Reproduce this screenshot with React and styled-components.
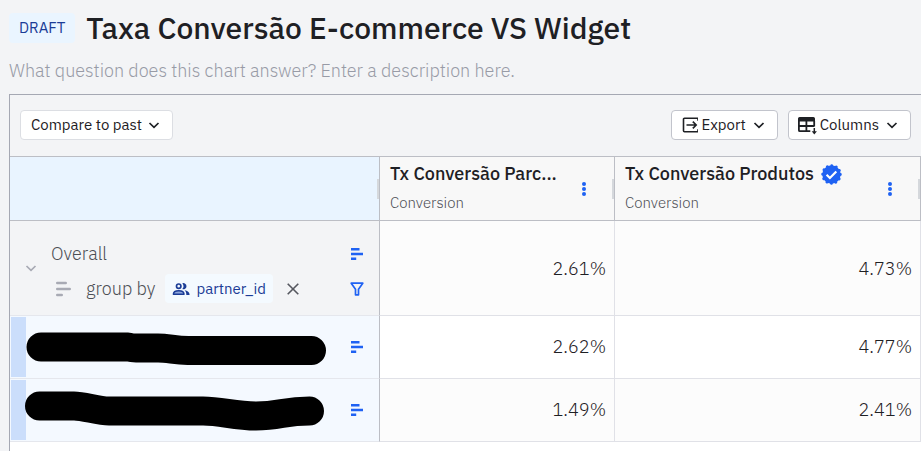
import React from "react";
import styled, { createGlobalStyle, css } from "styled-components";

const GlobalStyle = createGlobalStyle`
  *, *::before, *::after { box-sizing: border-box; }
  body {
    margin: 0;
    background: #f3f4f6;
    color: #1e2024;
    font-family: "IBM Plex Sans", Roboto, sans-serif;
  }
  button { font: inherit; color: inherit; cursor: pointer; }
  svg { display: block; flex: none; }
`;

const Page = styled.main`
  min-height: 100vh;
  display: flex;
  flex-direction: column;
  padding: 11px 0 0 9px;
`;

const Header = styled.header`
  display: flex;
  flex-direction: column;
  gap: 14px;
  padding-bottom: 11px;
`;

const TitleRow = styled.div`
  display: flex;
  align-items: center;
  gap: 11px;
`;

const DraftTag = styled.span`
  padding: 0 10px;
  border-radius: 4px;
  background: #eaf5ff;
  color: #1b3c96;
  font-size: 15px;
  line-height: 30px;
`;

const Title = styled.h1`
  margin: 0;
  font-size: 30px;
  font-weight: 500;
  line-height: 34px;
`;

const Description = styled.p`
  margin: 0;
  color: #989ba6;
  font-size: 18px;
  font-weight: 300;
  line-height: 24px;
`;

const Panel = styled.section`
  flex: 1;
  display: flex;
  flex-direction: column;
  border: solid #a5a8b3;
  border-width: 1px 0 0 1px;
`;

const Toolbar = styled.div`
  display: flex;
  justify-content: space-between;
  align-items: center;
  padding: 15px 10px 16px;
`;

const ToolbarGroup = styled.div`
  display: flex;
  gap: 10px;
`;

const ToolButton = styled.button`
  display: flex;
  align-items: center;
  gap: ${(p) => (p.$iconic ? 3 : 6)}px;
  height: 30px;
  padding: 0 12px 0 ${(p) => (p.$iconic ? 8 : 10)}px;
  border: 1px solid ${(p) => (p.$iconic ? "#c2c4cc" : "#dcdee3")};
  border-radius: 4px;
  background: #fff;
  font-size: 15px;
  line-height: 20px;
`;

const ButtonLabel = styled.span`
  padding-right: 4px;
`;

const TableArea = styled.div`
  flex: 1;
  background: #fff;
`;

const Table = styled.table`
  width: 100%;
  table-layout: fixed;
  border-collapse: separate;
  border-spacing: 0;
`;

const LabelCol = styled.col`
  width: 370px;
`;

const MetricCol = styled.col`
  width: 235px;
`;

const HeadCell = styled.th`
  position: relative;
  height: 65px;
  padding: 0 0 0 10px;
  border: solid #bcbec5;
  border-width: 1px 1px 1px 0;
  background: ${(p) => (p.$label ? "#e9f4ff" : "#f8f8f8")};
  text-align: left;
  font-weight: 400;
`;

const ResizeHandle = styled.span`
  position: absolute;
  right: 0;
  top: 22px;
  width: 2px;
  height: 20px;
  background: #d5d8dc;
`;

const HeadContent = styled.div`
  display: flex;
  align-items: center;
  justify-content: space-between;
  padding-right: 24px;
`;

const HeadText = styled.div`
  display: flex;
  flex-direction: column;
  gap: 7px;
  padding-bottom: 2px;
`;

const MetricName = styled.div`
  display: flex;
  align-items: center;
  gap: 7px;
  font-size: 18px;
  font-weight: 500;
  line-height: 24px;
  white-space: nowrap;
`;

const MetricKind = styled.div`
  color: #4c4e54;
  font-size: 15px;
  font-weight: 300;
  line-height: 20px;
`;

const IconButton = styled.button`
  display: flex;
  padding: 0;
  border: 0;
  background: none;
  color: ${(p) => p.$color || "#1f62f3"};
`;

const rowHeight = css`
  height: ${(p) => (p.$overall ? 95 : 63)}px;
`;

const LabelCell = styled.th`
  ${rowHeight}
  padding: 0;
  border: solid #e5e7ed;
  border-width: 0 0 1px;
  border-right: 1px solid #bcbec5;
  background: ${(p) => (p.$overall ? "#f3f4f6" : "#f4f9ff")};
  text-align: left;
  font-weight: 400;
`;

const ValueCell = styled.td`
  ${rowHeight}
  padding: ${(p) => (p.$overall ? 2 : 0)}px 8px 0 0;
  border: solid #e0e1e7;
  border-width: 0 1px 1px 0;
  background: ${(p) => (p.$shaded ? "#fcfcfc" : "#fff")};
  color: #1e2024;
  font-size: 18px;
  font-weight: 300;
  line-height: 24px;
  text-align: right;
`;

const OverallLayout = styled.div`
  display: flex;
  align-items: center;
  gap: 14px;
  padding: 0 15px;
`;

const OverallLines = styled.div`
  flex: 1;
  display: flex;
  flex-direction: column;
  gap: 8px;
  padding-top: 9px;
`;

const OverallLine = styled.div`
  display: flex;
  align-items: center;
  justify-content: space-between;
  color: #4c4e54;
  font-size: 18px;
  font-weight: 300;
  line-height: 24px;
`;

const GroupBy = styled.div`
  display: flex;
  align-items: center;
  gap: 10px;
  padding-left: 5px;
`;

const GroupLabel = styled.span`
  padding-left: 5px;
`;

const PropertyChip = styled.button`
  display: flex;
  align-items: center;
  gap: 6px;
  height: 29px;
  padding: 0 7px;
  border: 0;
  border-radius: 4px;
  background: #f4faff;
  color: #1b3c96;
  font-size: 15px;
  font-weight: 400;
  line-height: 20px;
`;

const RemoveSlot = styled.span`
  padding-left: 4px;
`;

const SegmentLayout = styled.div`
  display: flex;
  align-items: center;
  justify-content: space-between;
  padding: 0 15px 0 1px;
`;

const SegmentLabel = styled.div`
  display: flex;
  align-items: center;
`;

const SegmentMark = styled.span`
  width: 15px;
  height: 60px;
  background: #cbdefb;
`;

const Redaction = styled.svg`
  margin-left: -4px;
`;

const Chevron = () => (
  <svg width="12" height="12" viewBox="0 0 12 12" fill="none" stroke="currentColor" strokeWidth="1.7" aria-hidden="true">
    <path d="M1.5 4 6 8.4 10.5 4" />
  </svg>
);

const ExportIcon = () => (
  <svg width="18" height="18" viewBox="0 0 18 18" fill="none" stroke="currentColor" strokeWidth="1.6" aria-hidden="true">
    <path d="M18 4.7V3.2a1 1 0 0 0-1-1H4.5a1 1 0 0 0-1 1v11.6a1 1 0 0 0 1 1H17a1 1 0 0 0 1-1v-1.5M6.5 9h9.700M12.800 5.600 16.200 9l-3.400 3.400" />
  </svg>
);

const ColumnsIcon = () => (
  <svg width="20" height="19" viewBox="0 0 20 19" fill="none" stroke="currentColor" aria-hidden="true">
    <path d="M1.9 5v9.2a1 1 0 0 0 1 1h10.4M17.2 5v5.5M9.4 5v10.2M1.9 10h15.3" strokeWidth="1.8" />
    <path d="M2.6 1h13.8A1.6 1.6 0 0 1 18 2.6V5.5H1V2.6A1.6 1.6 0 0 1 2.6 1Z" fill="currentColor" stroke="none" />
    <path d="M17.3 12v4.5" strokeWidth="1.5" />
    <path d="M14.7 15.2h5.2l-2.6 3.4Z" fill="currentColor" stroke="none" />
  </svg>
);

const VerifiedIcon = () => (
  <svg width="21" height="21" viewBox="0 0 21 21" role="img" aria-label="Verified">
    <circle cx="10.5" cy="10.5" r="9.2" fill="#1f62f3" />
    <circle cx="10.5" cy="10.5" r="8.9" fill="none" stroke="#1f62f3" strokeWidth="2.8" strokeLinecap="round" strokeDasharray="0.1 4.56" />
    <path d="m5.6 10.7 3.3 3.3 6.4-6.5" fill="none" stroke="#fff" strokeWidth="2.2" />
  </svg>
);

const DotsIcon = () => (
  <svg width="12" height="16" viewBox="0 0 12 16" fill="currentColor" aria-hidden="true">
    <circle cx="6" cy="3" r="2" />
    <circle cx="6" cy="8" r="2" />
    <circle cx="6" cy="13" r="2" />
  </svg>
);

const BarsIcon = () => (
  <svg width="14" height="14" viewBox="0 0 14 14" fill="currentColor" aria-hidden="true">
    <path d="M1 1h8.5v2.5H1zM1 5.800h12v2.500H1zM1 10.500h5.200V13H1z" />
  </svg>
);

const GroupBarsIcon = () => (
  <svg width="15" height="16" viewBox="0 0 15 16" fill="none" stroke="#a8aab4" strokeWidth="2.6" strokeLinecap="round" aria-hidden="true">
    <path d="M1.3 2h8.4M1.3 8h12.4M1.3 14h4.4" />
  </svg>
);

const FilterIcon = () => (
  <svg width="14" height="14" viewBox="0 0 14 14" fill="none" stroke="currentColor" strokeWidth="1.7" strokeLinejoin="round" aria-hidden="true">
    <path d="M1.2 1.2h11.6L8.5 7.2v5.600h-3V7.200Z" />
  </svg>
);

const CloseIcon = () => (
  <svg width="12" height="12" viewBox="0 0 12 12" fill="none" stroke="currentColor" strokeWidth="1.6" aria-hidden="true">
    <path d="m.7.7 10.6 10.6M11.3.7.7 11.3" />
  </svg>
);

const PeopleIcon = () => (
  <svg width="18" height="12" viewBox="0 0 18 12" aria-hidden="true">
    <circle cx="6.7" cy="3.2" r="2.2" fill="none" stroke="currentColor" strokeWidth="1.7" />
    <path d="M1.4 11.2c0-2.2 2.4-3.5 5.3-3.5s5.3 1.3 5.3 3.5Z" fill="#8fa6dc" stroke="currentColor" strokeWidth="1.5" strokeLinejoin="round" />
    <path d="M10.3.3a3.1 3.1 0 1 1 0 5.8 4.5 4.5 0 0 0 0-5.8ZM12.6 7.3c2.9.3 5 1.8 5 4.7h-3.3c.1-2-.4-3.5-1.7-4.7Z" fill="currentColor" />
  </svg>
);

const segments = [
  {
    id: "first",
    stroke: "M19 30H106Q110 31 114 31H136C146 31 152 33 166 33.5H289.5",
    values: ["2.62%", "4.77%"],
  },
  {
    id: "second",
    stroke: "M17.5 26H52C62 26 76 31 87 31H181C200 31 212 36 234 36C258 36 262 31 287.5 31",
    values: ["1.49%", "2.41%"],
    shaded: true,
  },
];

const metrics = [
  { name: "Tx Conversão Parc...", kind: "Conversion" },
  { name: "Tx Conversão Produtos", kind: "Conversion", verified: true },
];

export default function App() {
  return (
    <>
      <GlobalStyle />
      <Page>
        <Header>
          <TitleRow>
            <DraftTag>DRAFT</DraftTag>
            <Title>Taxa Conversão E-commerce VS Widget</Title>
          </TitleRow>
          <Description>What question does this chart answer? Enter a description here.</Description>
        </Header>
        <Panel>
          <Toolbar>
            <ToolButton>
              Compare to past
              <Chevron />
            </ToolButton>
            <ToolbarGroup>
              <ToolButton $iconic>
                <ExportIcon />
                <ButtonLabel>Export</ButtonLabel>
                <Chevron />
              </ToolButton>
              <ToolButton $iconic>
                <ColumnsIcon />
                <ButtonLabel>Columns</ButtonLabel>
                <Chevron />
              </ToolButton>
            </ToolbarGroup>
          </Toolbar>
          <TableArea>
            <Table>
              <colgroup>
                <LabelCol />
                <MetricCol />
                <col />
              </colgroup>
              <thead>
                <tr>
                  <HeadCell $label aria-label="Segment">
                    <ResizeHandle />
                  </HeadCell>
                  {metrics.map((m) => (
                    <HeadCell key={m.name} scope="col">
                      <HeadContent>
                        <HeadText>
                          <MetricName>
                            {m.name}
                            {m.verified && <VerifiedIcon />}
                          </MetricName>
                          <MetricKind>{m.kind}</MetricKind>
                        </HeadText>
                        <IconButton aria-label={`Options for ${m.name}`}>
                          <DotsIcon />
                        </IconButton>
                      </HeadContent>
                      <ResizeHandle />
                    </HeadCell>
                  ))}
                </tr>
              </thead>
              <tbody>
                <tr>
                  <LabelCell $overall scope="row">
                    <OverallLayout>
                      <IconButton $color="#a8aab4" aria-label="Collapse groups">
                        <Chevron />
                      </IconButton>
                      <OverallLines>
                        <OverallLine>
                          Overall
                          <IconButton aria-label="Chart overall">
                            <BarsIcon />
                          </IconButton>
                        </OverallLine>
                        <OverallLine>
                          <GroupBy>
                            <GroupBarsIcon />
                            <GroupLabel>group by</GroupLabel>
                            <PropertyChip>
                              <PeopleIcon />
                              partner_id
                            </PropertyChip>
                            <RemoveSlot>
                              <IconButton $color="#55575f" aria-label="Remove partner_id">
                                <CloseIcon />
                              </IconButton>
                            </RemoveSlot>
                          </GroupBy>
                          <IconButton aria-label="Filter">
                            <FilterIcon />
                          </IconButton>
                        </OverallLine>
                      </OverallLines>
                    </OverallLayout>
                  </LabelCell>
                  <ValueCell $overall $shaded>2.61%</ValueCell>
                  <ValueCell $overall $shaded>4.73%</ValueCell>
                </tr>
                {segments.map((s) => (
                  <tr key={s.id}>
                    <LabelCell scope="row">
                      <SegmentLayout>
                        <SegmentLabel>
                          <SegmentMark />
                          <Redaction width="306" height="60" viewBox="0 0 306 60" role="img" aria-label="Hidden name">
                            <path d={s.stroke} fill="none" stroke="#000" strokeWidth="29" strokeLinecap="round" strokeLinejoin="round" />
                          </Redaction>
                        </SegmentLabel>
                        <IconButton aria-label="Chart segment">
                          <BarsIcon />
                        </IconButton>
                      </SegmentLayout>
                    </LabelCell>
                    {s.values.map((v) => (
                      <ValueCell key={v} $shaded={s.shaded}>
                        {v}
                      </ValueCell>
                    ))}
                  </tr>
                ))}
              </tbody>
            </Table>
          </TableArea>
        </Panel>
      </Page>
    </>
  );
}
